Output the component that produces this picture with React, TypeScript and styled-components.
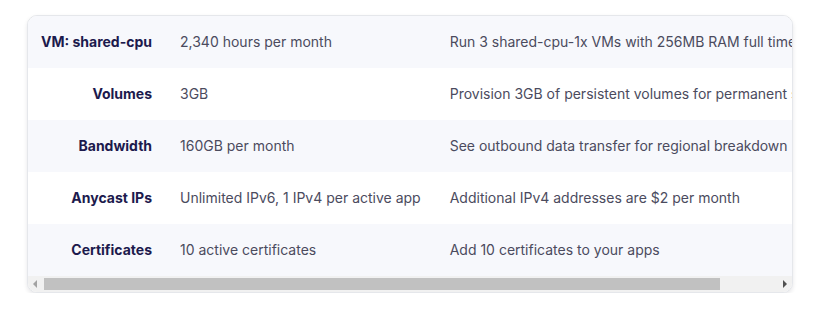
import React from 'react';
import styled, { createGlobalStyle } from 'styled-components';

const GlobalStyle = createGlobalStyle`
  html, body {
    margin: 0;
    padding: 0;
    background: #ffffff;
  }
  body {
    font-family: Inter, "Noto Sans", sans-serif;
    -webkit-font-smoothing: antialiased;
  }
`;

const Page = styled.div`
  padding: 15px 23px 0 27px;
`;

const Card = styled.div`
  border: 1px solid #e5e7eb;
  border-radius: 10px;
  box-shadow: 0 2px 4px rgba(15, 23, 42, 0.1);
  overflow: hidden;
  background: #ffffff;
`;

const Viewport = styled.div`
  overflow: hidden;
`;

const Table = styled.table`
  border-collapse: collapse;
  font-size: 14px;
  line-height: 20px;
  white-space: nowrap;
`;

const Row = styled.tr<{ $striped: boolean }>`
  background: ${(p) => (p.$striped ? '#f7f8fc' : '#ffffff')};
  height: 52px;
`;

const Label = styled.th`
  text-align: right;
  font-weight: 700;
  color: #1c1a4d;
  padding: 0 14px 0 13px;
`;

const Cell = styled.td`
  color: #4b4b5e;
  padding: 0 15px 0 14px;
`;

// classic horizontal scrollbar, drawn since the screenshot hides native ones
const ScrollBar = styled.div`
  display: flex;
  height: 16px;
  background: #f1f1f1;
`;

const ArrowButton = styled.div<{ $dir: 'left' | 'right'; $disabled?: boolean }>`
  width: 16px;
  display: flex;
  align-items: center;
  justify-content: center;
  flex-shrink: 0;

  &::before {
    content: '';
    width: 0;
    height: 0;
    border-top: 4px solid transparent;
    border-bottom: 4px solid transparent;
    ${(p) =>
      p.$dir === 'left'
        ? `border-right: 4px solid ${p.$disabled ? '#a3a3a3' : '#505050'}; margin-right: 2px;`
        : `border-left: 4px solid ${p.$disabled ? '#a3a3a3' : '#505050'}; margin-left: 1px;`}
  }
`;

const Track = styled.div`
  flex: 1;
  padding: 2px 0;
`;

const Thumb = styled.div<{ $ratio: number }>`
  height: 100%;
  width: ${(p) => p.$ratio * 100}%;
  background: #c1c1c1;
`;

const rows = [
  ['VM: shared-cpu', '2,340 hours per month', 'Run 3 shared-cpu-1x VMs with 256MB RAM full time'],
  ['Volumes', '3GB', 'Provision 3GB of persistent volumes for permanent storage'],
  ['Bandwidth', '160GB per month', 'See outbound data transfer for regional breakdown'],
  ['Anycast IPs', 'Unlimited IPv6, 1 IPv4 per active app', 'Additional IPv4 addresses are $2 per month'],
  ['Certificates', '10 active certificates', 'Add 10 certificates to your apps'],
];

export default function App() {
  return (
    <>
      <GlobalStyle />
      <Page>
        <Card>
          <Viewport>
            <Table>
              <tbody>
                {rows.map(([label, amount, note], i) => (
                  <Row key={label} $striped={i % 2 === 0}>
                    <Label>{label}</Label>
                    <Cell>{amount}</Cell>
                    <Cell>{note}</Cell>
                  </Row>
                ))}
              </tbody>
            </Table>
          </Viewport>
          <ScrollBar>
            <ArrowButton $dir="left" $disabled />
            <Track>
              <Thumb $ratio={0.923} />
            </Track>
            <ArrowButton $dir="right" />
          </ScrollBar>
        </Card>
      </Page>
    </>
  );
}
